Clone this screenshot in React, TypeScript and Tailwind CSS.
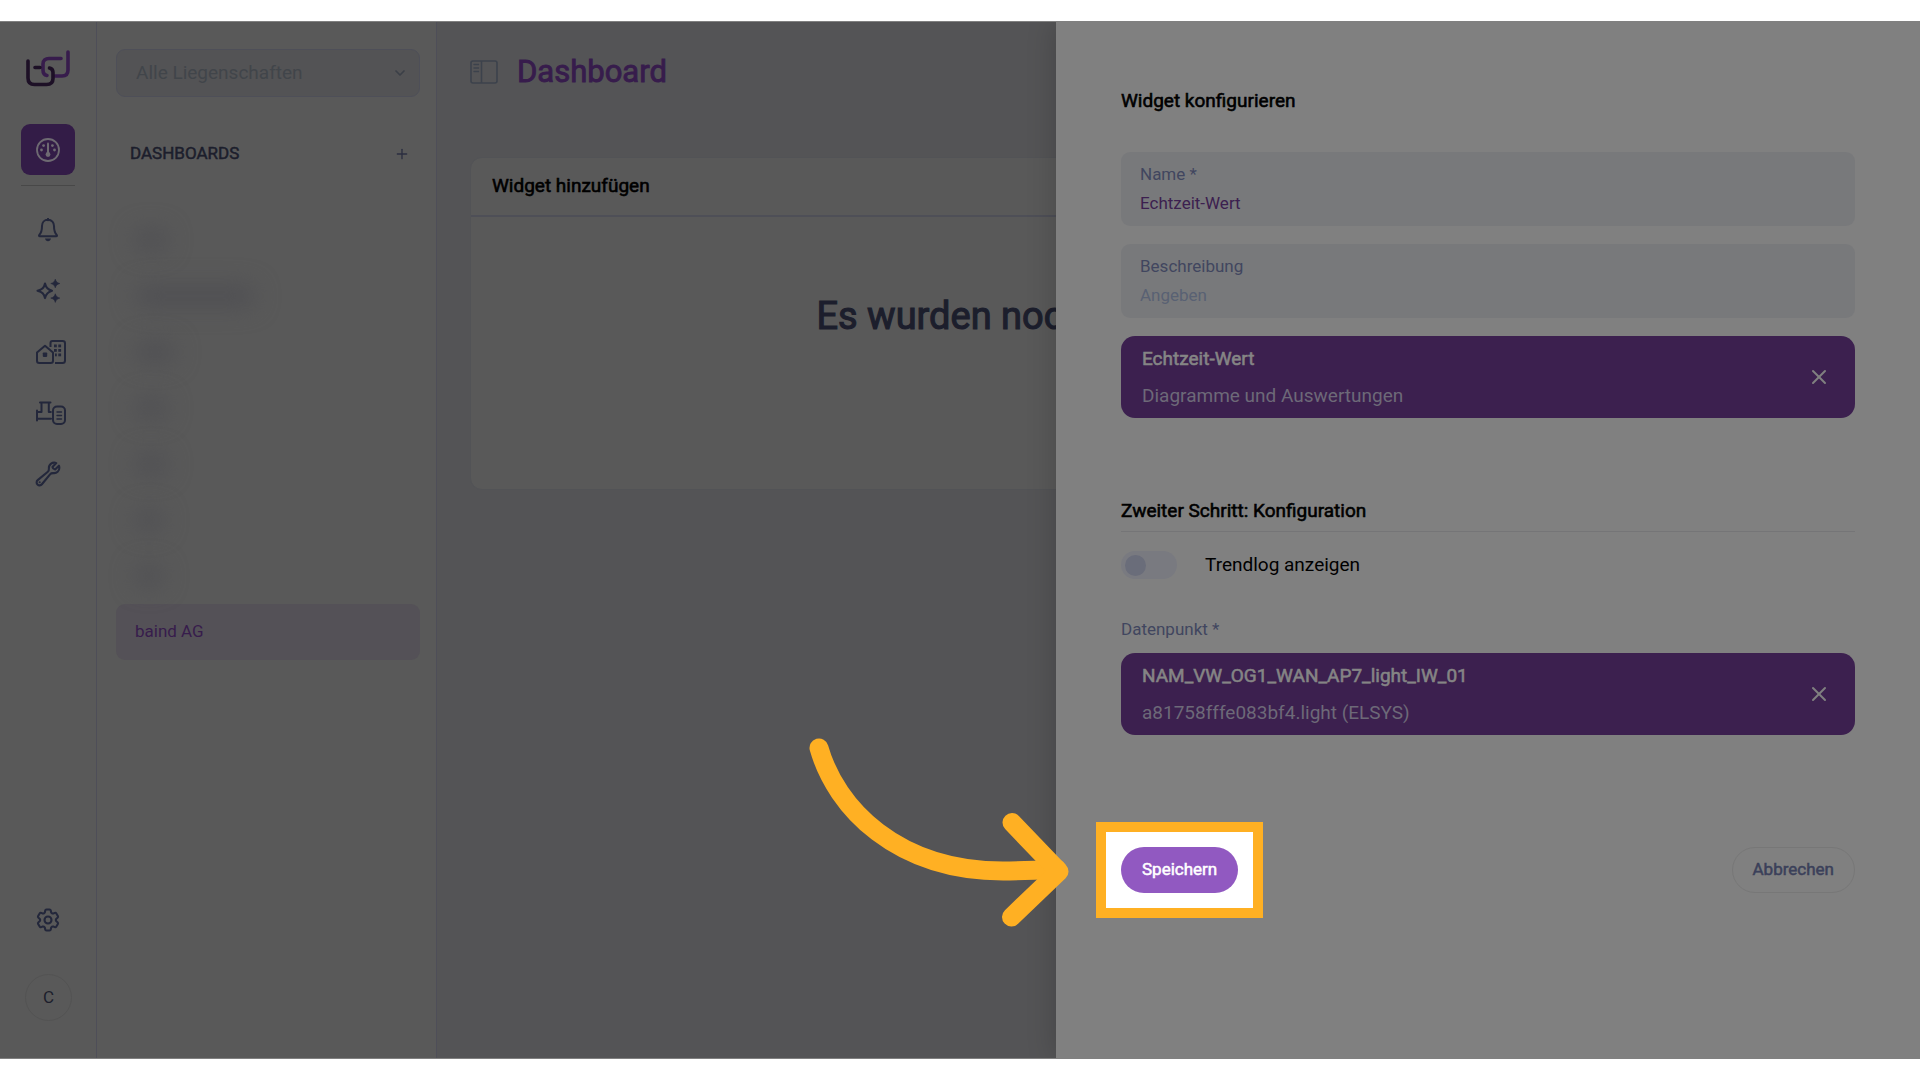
import { useState, type ReactNode } from "react";
import { ChevronDown, Plus, X } from "lucide-react";
import { HiOutlineCog6Tooth, HiOutlineWrench } from "react-icons/hi2";

function Logo() {
  return (
    <svg width="44" height="37" viewBox="0 0 44 37" fill="none" strokeWidth="3.6" strokeLinecap="round">
      <path
        d="M42 2v18c0 4-2.500 6-6 6h-7M35 8.500H23c-3.500 0-6 2-6 5.500v6c0 3 1.500 5 4 5.500"
        stroke="#371c4c"
      />
      <path
        d="M2 11v17c0 4.500 2.500 6.500 6.500 6.500h12c4 0 6.500-2 6.500-6v-6c0-2.500-1-4-3.500-4.500M9 17.500h5"
        stroke="#1d1026"
      />
    </svg>
  );
}

function GaugeIcon() {
  return (
    <svg width="24" height="24" viewBox="0 0 24 24" fill="none" stroke="currentColor">
      <circle cx="12" cy="12" r="11" strokeWidth="1.8" />
      <circle cx="12" cy="16.500" r="2.400" fill="currentColor" stroke="none" />
      <path d="M12 5.500v10" strokeWidth="2" strokeLinecap="round" />
      <g fill="currentColor" stroke="none">
        <circle cx="5.500" cy="12" r="1.400" />
        <circle cx="18.500" cy="12" r="1.400" />
        <circle cx="7.600" cy="7.600" r="1.400" />
        <circle cx="16.400" cy="7.600" r="1.400" />
      </g>
    </svg>
  );
}

function BellIcon() {
  return (
    <svg width="24" height="24" viewBox="0 0 24 24" fill="none" stroke="currentColor" strokeWidth="2">
      <path
        d="M12 1.800c-3.800 0-6 2.800-6 6.200 0 4.800-.9 7-2.700 8.900-.6.7-.3 1.300.5 1.300h16.400c.8 0 1.100-.6.500-1.300C18.900 15 18 12.800 18 8c0-3.400-2.200-6.200-6-6.200z"
        strokeLinejoin="round"
      />
      <path d="M12 .8v1.500" strokeLinecap="round" />
      <path d="M9 20.600h6c-.3 1.600-1.500 2.600-3 2.600s-2.700-1-3-2.600z" fill="currentColor" stroke="none" />
    </svg>
  );
}

function SparkleIcon() {
  return (
    <svg width="24" height="24" viewBox="0 0 24 24" fill="currentColor">
      <path
        d="M9 4.500c1 4.400 2.600 6.100 7 7.300-4.400 1.200-6 2.900-7 7.300-1-4.400-2.600-6.100-7.500-7.300C6.400 10.600 8 8.900 9 4.500z"
        fill="none"
        stroke="currentColor"
        strokeWidth="2.100"
        strokeLinejoin="round"
      />
      <path d="M19.300.2c.7 2.500 1.700 3.500 4.500 4.300-2.800.8-3.800 1.800-4.500 4.300-.7-2.500-1.700-3.500-4.500-4.300 2.800-.8 3.800-1.800 4.500-4.300z" strokeWidth=".6" stroke="currentColor" />
      <path d="M19.300 14.800c.7 2.500 1.700 3.500 4.500 4.300-2.800.8-3.800 1.800-4.500 4.300-.7-2.500-1.700-3.500-4.500-4.300 2.800-.8 3.800-1.800 4.500-4.300z" strokeWidth=".6" stroke="currentColor" />
    </svg>
  );
}

function BuildingsIcon() {
  return (
    <svg width="30" height="24" viewBox="0 0 30 24" fill="none" stroke="currentColor" strokeWidth="2">
      <path
        d="M1 12.500 9 5.800l8 6.700v8.200c0 1.400-.8 2.300-2.300 2.300H3.300C1.800 23 1 22.100 1 20.700z"
        strokeLinejoin="round"
      />
      <path d="M14.500 7V3c0-1.200.8-2 2-2h10c1.500 0 2.500.9 2.500 2.300v17.200c0 1.500-.9 2.500-2.500 2.500H19" />
      <g fill="currentColor" stroke="none">
        <rect x="6.800" y="12.500" width="4.400" height="4.400" rx=".8" />
        <rect x="18" y="4.500" width="2.800" height="2.800" />
        <rect x="22.300" y="4.500" width="2.800" height="2.800" />
        <rect x="18" y="9" width="2.800" height="2.800" />
        <rect x="22.300" y="9" width="2.800" height="2.800" />
        <rect x="19" y="13.500" width="1.800" height="2.800" />
        <rect x="22.300" y="13.500" width="2.800" height="2.800" />
      </g>
    </svg>
  );
}

function ValveIcon() {
  return (
    <svg
      width="30"
      height="24"
      viewBox="0 0 30 24"
      fill="none"
      stroke="currentColor"
      strokeWidth="2"
      strokeLinecap="round"
      strokeLinejoin="round"
    >
      <path d="M1 9.500v10M1 11h4.500V1.500M4 1.500h10.500M12.800 1.500V11h2M1 17.800h14" />
      <rect x="17" y="5.500" width="12" height="17.500" rx="4" />
      <path d="M21 11h4.500M21 14.500h4.500M21 18h4.500" strokeWidth="1.400" />
    </svg>
  );
}

function SidebarToggleIcon() {
  return (
    <svg width="28" height="24" viewBox="0 0 28 24" fill="none" stroke="currentColor" strokeWidth="1.600">
      <rect x="1" y="1" width="26" height="22" rx="2" />
      <path d="M11.500 1v22" />
      <path d="M4 4.500h4.500M4 8h4.500M4 11.500h4.500" strokeWidth="1.400" strokeLinecap="round" />
    </svg>
  );
}

const railItems = [
  { label: "Meldungen", icon: <BellIcon /> },
  { label: "Assistent", icon: <SparkleIcon /> },
  { label: "Liegenschaften", icon: <BuildingsIcon /> },
  { label: "Anlagen", icon: <ValveIcon /> },
  { label: "Wartung", icon: <HiOutlineWrench size={28} strokeWidth={1.8} className="-ml-0.5" /> },
];

const hiddenDashboards = ["w-8", "w-30", "w-10", "w-8", "w-8", "w-7", "w-7"];

function Rail() {
  return (
    <nav className="flex w-[97px] shrink-0 flex-col border-r border-[#4e4e58] px-[21px] pt-7 text-[#23273b]">
      <div className="flex h-[37px] pl-[5px]">
        <Logo />
      </div>
      <button
        aria-label="Dashboards"
        className="mt-[37px] flex h-[51px] w-[54px] items-center justify-center rounded-[9px] bg-[#331c47] text-[#6e6a72]"
      >
        <GaugeIcon />
      </button>
      <hr className="mt-[10px] w-[54px] border-[#484848]" />
      <div className="mt-[13px] flex flex-col">
        {railItems.map((item) => (
          <button key={item.label} aria-label={item.label} className="flex h-[61px] items-center pl-[15px]">
            {item.icon}
          </button>
        ))}
      </div>
      <button aria-label="Einstellungen" className="mt-auto flex h-10 items-center pl-[13px]">
        <HiOutlineCog6Tooth size={28} strokeWidth={1.8} />
      </button>
      <button className="mt-[34px] mb-[37px] ml-1 flex size-[47px] items-center justify-center rounded-full border border-[#535353] text-[17px] text-[#1c1e2c]">
        C
      </button>
    </nav>
  );
}

function DashboardList() {
  return (
    <aside className="flex w-[340px] shrink-0 flex-col border-r border-[#4e4e58] pt-[27px] pr-4 pl-[19px]">
      <div className="relative">
        <select
          aria-label="Liegenschaft"
          className="h-12 w-full appearance-none rounded-[9px] border border-[#4e4f58] bg-[#535355] pl-[19px] text-[19px] text-[#41454a]"
        >
          <option>Alle Liegenschaften</option>
        </select>
        <ChevronDown className="pointer-events-none absolute top-4 right-3 size-4 text-[#3b3f47]" strokeWidth={2.5} />
      </div>
      <div className="mt-[43px] flex h-7 items-center justify-between pr-2.5 pl-3.5">
        <h2 className="text-[17px] text-[#1c1e2c] [-webkit-text-stroke:0.03em]">DASHBOARDS</h2>
        <button aria-label="Dashboard hinzufügen">
          <Plus className="size-4 text-[#2b2e40]" strokeWidth={2} />
        </button>
      </div>
      <ul className="mt-11">
        {hiddenDashboards.map((width, i) => (
          <li key={i} className="flex h-14 items-center pl-[19px]">
            <span className={`h-5 rounded-full bg-[#4e4e52] blur-md ${width}`} />
          </li>
        ))}
        <li>
          <a
            href="#baind"
            className="flex h-14 items-center rounded-[9px] bg-[#545157] pl-[19px] text-[17px] text-[#371c4c]"
          >
            baind AG
          </a>
        </li>
      </ul>
    </aside>
  );
}

function Main() {
  return (
    <main className="min-w-0 flex-1 bg-[#545456] px-[33px] pt-[27px]">
      <header className="flex h-[46px] items-center gap-[19px]">
        <button aria-label="Seitenleiste umschalten" className="text-[#3c424c]">
          <SidebarToggleIcon />
        </button>
        <h1 className="text-[31px] text-[#371c4c] [-webkit-text-stroke:0.03em]">Dashboard</h1>
      </header>
      <section className="mt-[62px] rounded-xl border border-[#525356] bg-[#595959]">
        <h2 className="flex h-[59px] items-center border-b-2 border-[#4e4f57] pl-[21px] text-[19px] text-black [-webkit-text-stroke:0.03em]">
          Widget hinzufügen
        </h2>
        <p className="flex h-[272px] justify-center pt-[74px] text-[38px] leading-[50px] whitespace-nowrap text-[#1c1e2c] [-webkit-text-stroke:0.03em]">
          Es wurden noch keine Widgets hinzugefügt
        </p>
      </section>
    </main>
  );
}

interface FieldProps {
  id: string;
  label: string;
  value?: string;
  placeholder?: string;
}

function Field({ id, label, value, placeholder }: FieldProps) {
  return (
    <div className="flex h-[74px] flex-col justify-center rounded-[9px] bg-[#78797b] px-[19px]">
      <label htmlFor={id} className="text-[17px] leading-7 text-[#41465f]">
        {label}
      </label>
      <input
        id={id}
        defaultValue={value}
        placeholder={placeholder}
        className="h-[30px] w-full text-[17px] text-[#3c204f] outline-none placeholder:text-[#596173]"
      />
    </div>
  );
}

function SelectedCard({ title, children }: { title: string; children: ReactNode }) {
  return (
    <div className="flex h-[82px] items-center justify-between rounded-[14px] bg-[#3c204f] pr-6 pl-[21px] text-[19px]">
      <div>
        <p className="leading-[38px] text-[#858585] [-webkit-text-stroke:0.03em]">{title}</p>
        <p className="leading-[36px] text-[#6d6978]">{children}</p>
      </div>
      <button aria-label={`${title} entfernen`}>
        <X className="size-6 text-[#808080]" strokeWidth={2} />
      </button>
    </div>
  );
}

function Arrow() {
  return (
    <svg
      width="264"
      height="192"
      viewBox="807 736 264 192"
      fill="none"
      stroke="#ffb023"
      strokeWidth="19"
      strokeLinecap="round"
      strokeLinejoin="round"
      className="pointer-events-none absolute top-[-111px] right-full mr-[50px]"
    >
      <path d="M819 748C836 808 897 871 1003 871c18 0 36-1 54-2" />
      <path d="M1012 822.500 1059 871.500 1011.500 917" />
    </svg>
  );
}

function WidgetDrawer() {
  const [trendlog, setTrendlog] = useState(false);

  return (
    <div
      role="dialog"
      aria-labelledby="drawer-title"
      className="absolute inset-y-0 right-0 w-[45%] bg-[#808080] px-[65px] pt-16 shadow-[0_0_28px_rgba(0,0,0,0.2)]"
    >
      <h2 id="drawer-title" className="text-[19px] leading-[30px] text-black [-webkit-text-stroke:0.03em]">
        Widget konfigurieren
      </h2>
      <div className="mt-9 flex flex-col gap-[18px]">
        <Field id="name" label="Name *" value="Echtzeit-Wert" />
        <Field id="description" label="Beschreibung" placeholder="Angeben" />
        <SelectedCard title="Echtzeit-Wert">Diagramme und Auswertungen</SelectedCard>
      </div>

      <h3 className="mt-[78px] border-b border-[#757577] pb-[5px] text-[19px] leading-[30px] text-black [-webkit-text-stroke:0.03em]">
        Zweiter Schritt: Konfiguration
      </h3>
      <label className="mt-[19px] flex h-7 items-center text-[19px] text-black">
        <input
          type="checkbox"
          checked={trendlog}
          onChange={(e) => setTrendlog(e.target.checked)}
          className="peer sr-only"
        />
        <span className="mr-[28px] flex h-7 w-14 items-center rounded-full bg-[#797a80] px-1 peer-checked:justify-end">
          <span className="size-[21px] rounded-full bg-[#6a6d7a]" />
        </span>
        Trendlog anzeigen
      </label>

      <p className="mt-9 mb-[10px] text-[17px] leading-7 text-[#41465f]">Datenpunkt *</p>
      <SelectedCard title="NAM_VW_OG1_WAN_AP7_light_IW_01">a81758fffe083bf4.light (ELSYS)</SelectedCard>

      <div className="mt-28 flex items-center justify-between">
        <div className="relative">
          <div className="absolute -inset-[25px] border-10 border-[#ffb023] bg-white" />
          <Arrow />
          <button className="relative h-[46px] rounded-full bg-[#9159c1] px-[21px] text-[17px] text-white [-webkit-text-stroke:0.03em]">
            Speichern
          </button>
        </div>
        <button className="h-[46px] rounded-full border border-[#777] px-5 text-[17px] text-[#3b405a] [-webkit-text-stroke:0.03em]">
          Abbrechen
        </button>
      </div>
    </div>
  );
}

export default function App() {
  return (
    <div className="flex min-h-screen flex-col bg-white py-[21px] font-[Roboto,sans-serif]">
      <div className="relative flex flex-1 overflow-hidden border-y border-[#808080] bg-[#595959]">
        <Rail />
        <DashboardList />
        <Main />
        <WidgetDrawer />
      </div>
    </div>
  );
}
